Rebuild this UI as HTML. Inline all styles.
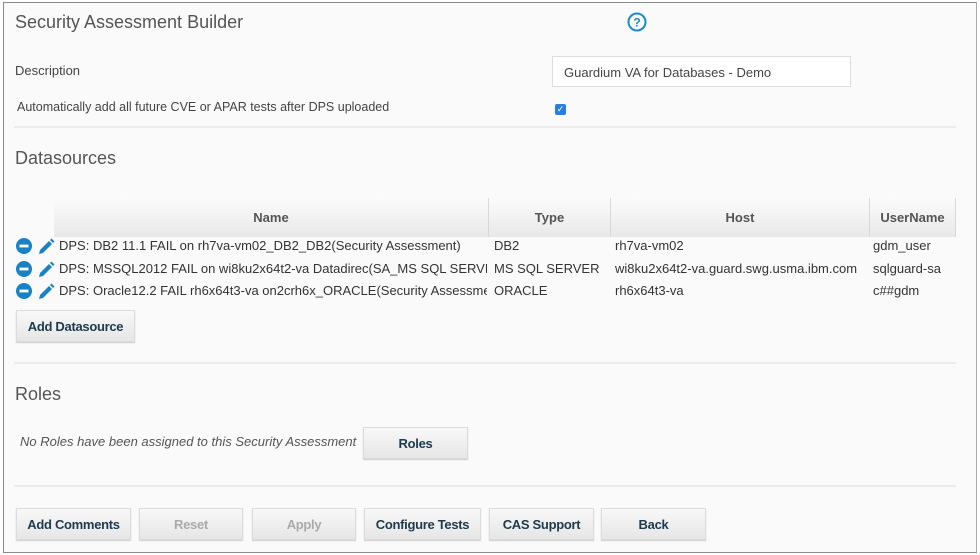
<!DOCTYPE html>
<html><head><style>
*{margin:0;padding:0;box-sizing:border-box}
body{width:980px;height:555px;background:#fff;font-family:"Liberation Sans",sans-serif;position:relative;overflow:hidden;color:#333}
.frame{position:absolute;left:3px;top:2px;width:974px;height:551px;border:1px solid #8a8a8a;border-right-color:#aaa;background:#fafafa}
.a{position:absolute;white-space:nowrap}
.h{font-size:18px;color:#555}
.t{font-size:13px;color:#444}
.sep{position:absolute;left:14px;width:942px;height:2px;background:#ececec}
.btn{position:absolute;height:32px;background:linear-gradient(#f8f8f8,#e6e6e6);border:1px solid #dcdcdc;box-shadow:0 1px 1px #ccc;font-size:13px;font-weight:bold;color:#1e3a4c;display:flex;align-items:center;justify-content:center;letter-spacing:-0.3px}
.dis{color:#aaa}
.th{position:absolute;top:198px;height:39px;background:linear-gradient(#fbfbfb,#e8e8e8);border-right:1px solid #d8d8d8;font-size:13px;font-weight:bold;color:#555;display:flex;align-items:center;justify-content:center}
.r{font-size:13px;color:#333}
</style></head><body>
<div class="frame"></div>
<div class="a h" style="left:15px;top:12px">Security Assessment Builder</div>
<svg class="a" style="left:627px;top:12px" width="20" height="20" viewBox="0 0 20 20"><circle cx="10" cy="10" r="8.5" fill="none" stroke="#1a8cc8" stroke-width="2"/><text x="10" y="14.5" text-anchor="middle" font-family="Liberation Sans" font-weight="bold" font-size="12" fill="#1a8cc8">?</text></svg>
<div class="a t" style="left:15px;top:63px">Description</div>
<div class="a" style="left:552px;top:56px;width:299px;height:31px;background:#fff;border:1px solid #ddd;font-size:13px;color:#444;padding:8px 0 0 11px">Guardium VA for Databases - Demo</div>
<div class="a t" style="left:17px;top:100px;font-size:12.5px">Automatically add all future CVE or APAR tests after DPS uploaded</div>
<div class="a" style="left:555px;top:104px;width:11px;height:11px;background:#2a7de1;border-radius:2px;color:#fff;font-size:9px;line-height:11px;text-align:center">✓</div>
<div class="sep" style="top:126px"></div>
<div class="a h" style="left:15px;top:148px">Datasources</div>
<div class="a" style="left:54px;top:198px;width:902px;height:39px;border-bottom:1px solid #ddd"></div>
<div class="th" style="left:54px;width:435px">Name</div>
<div class="th" style="left:489px;width:122px">Type</div>
<div class="th" style="left:611px;width:259px">Host</div>
<div class="th" style="left:870px;width:86px">UserName</div>
<!-- rows -->
<svg class="a" style="left:15px;top:237px" width="45" height="64" viewBox="0 0 45 64">
<g><circle cx="9" cy="9" r="8" fill="#1a82c4"/><rect x="4.5" y="7.6" width="9" height="2.8" fill="#fff"/>
<path d="M24 17 L25 13 L34 4 L37 7 L28 16 Z" fill="#1a82c4"/><path d="M35 3 L36.5 1.5 L39.5 4.5 L38 6Z" fill="#1a82c4"/></g>
<g transform="translate(0,23)"><circle cx="9" cy="9" r="8" fill="#1a82c4"/><rect x="4.5" y="7.6" width="9" height="2.8" fill="#fff"/>
<path d="M24 17 L25 13 L34 4 L37 7 L28 16 Z" fill="#1a82c4"/><path d="M35 3 L36.5 1.5 L39.5 4.5 L38 6Z" fill="#1a82c4"/></g>
<g transform="translate(0,45)"><circle cx="9" cy="9" r="8" fill="#1a82c4"/><rect x="4.5" y="7.6" width="9" height="2.8" fill="#fff"/>
<path d="M24 17 L25 13 L34 4 L37 7 L28 16 Z" fill="#1a82c4"/><path d="M35 3 L36.5 1.5 L39.5 4.5 L38 6Z" fill="#1a82c4"/></g>
</svg>
<div class="a r" style="left:59px;top:238px;width:428px;overflow:hidden">DPS: DB2 11.1 FAIL on rh7va-vm02_DB2_DB2(Security Assessment)</div>
<div class="a r" style="left:59px;top:261px;width:428px;overflow:hidden">DPS: MSSQL2012 FAIL on wi8ku2x64t2-va Datadirec(SA_MS SQL SERVER)</div>
<div class="a r" style="left:59px;top:283px;width:428px;overflow:hidden">DPS: Oracle12.2 FAIL rh6x64t3-va on2crh6x_ORACLE(Security Assessment)</div>
<div class="a r" style="left:494px;top:238px">DB2</div>
<div class="a r" style="left:494px;top:261px">MS SQL SERVER</div>
<div class="a r" style="left:494px;top:283px">ORACLE</div>
<div class="a r" style="left:615px;top:238px">rh7va-vm02</div>
<div class="a r" style="left:615px;top:261px">wi8ku2x64t2-va.guard.swg.usma.ibm.com</div>
<div class="a r" style="left:615px;top:283px">rh6x64t3-va</div>
<div class="a r" style="left:873px;top:238px">gdm_user</div>
<div class="a r" style="left:873px;top:261px">sqlguard-sa</div>
<div class="a r" style="left:873px;top:283px">c##gdm</div>
<div class="btn" style="left:16px;top:310px;width:119px">Add Datasource</div>
<div class="sep" style="top:362px"></div>
<div class="a h" style="left:15px;top:384px">Roles</div>
<div class="a t" style="left:20px;top:434px;font-style:italic;color:#555">No Roles have been assigned to this Security Assessment</div>
<div class="btn" style="left:363px;top:427px;width:105px">Roles</div>
<div class="sep" style="top:485px"></div>
<div class="btn" style="left:16px;top:508px;width:115px">Add Comments</div>
<div class="btn dis" style="left:139px;top:508px;width:104px">Reset</div>
<div class="btn dis" style="left:252px;top:508px;width:104px">Apply</div>
<div class="btn" style="left:364px;top:508px;width:117px">Configure Tests</div>
<div class="btn" style="left:489px;top:508px;width:105px">CAS Support</div>
<div class="btn" style="left:601px;top:508px;width:105px">Back</div>
</body></html>
